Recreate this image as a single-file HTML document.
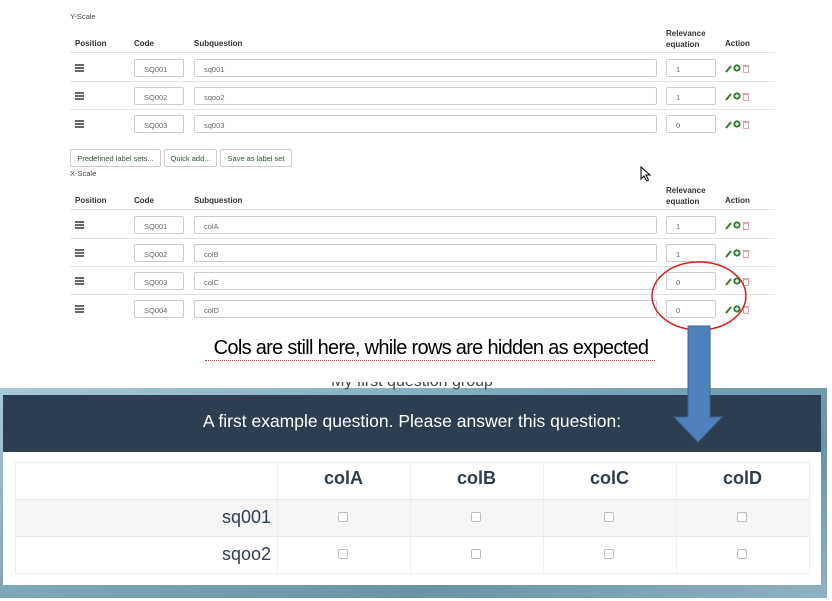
<!DOCTYPE html>
<html><head><meta charset="utf-8"><style>
*{box-sizing:border-box;margin:0;padding:0}
body{width:832px;height:601px;background:#fff;position:relative;overflow:hidden;font-family:"Liberation Sans",sans-serif;font-size:8px;color:#333}
.a{position:absolute}
.h{font-weight:bold;font-size:8px;color:#333}
.inp{position:absolute;height:18px;border:1px solid #ccc;border-radius:2px;font-size:7.5px;color:#666;padding:5px 0 0 9px;background:#fff}
.line{position:absolute;left:70px;width:705px;height:1px;background:#e3e3e3}
.bars{position:absolute;width:9px;height:8px}
.btn{position:absolute;top:149px;height:18px;border:1px solid #ccc;border-radius:2px;font-size:7.5px;color:#2d5a2d;padding:4px 0 0 0;text-align:center}
.ic{position:absolute}
.bg{left:0;top:388px;width:827px;height:210px;background:linear-gradient(160deg,#a8c9d8 0%,#7fa6bb 40%,#6a93a8 70%,#8fb2c4 100%)}
.cap{left:205px;width:452px;text-align:center;top:337px;font-family:"Liberation Sans",sans-serif;font-size:20px;color:#000;letter-spacing:-0.7px;white-space:nowrap}
.cb{position:absolute;width:10px;height:10px;border:1px solid #bbb;border-radius:2px;background:#fff}
.ch{position:absolute;top:468px;width:133px;text-align:center;font-size:18px;font-weight:bold;color:#2d3e50}
.rl{position:absolute;left:15px;width:256px;text-align:right;font-size:18px;color:#2d3e50}
</style></head><body>

<div class="a" style="left:70px;top:12px;font-size:7.5px;color:#444">Y-Scale</div>
<div class="a h" style="left:75px;top:39px">Position</div>
<div class="a h" style="left:134px;top:39px">Code</div>
<div class="a h" style="left:194px;top:39px">Subquestion</div>
<div class="a h" style="left:666px;top:28px;line-height:11px">Relevance<br>equation</div>
<div class="a h" style="left:725px;top:39px">Action</div>
<div class="line" style="top:52px"></div>

<div class="btn" style="left:70px;width:91px">Predefined label sets...</div>
<div class="btn" style="left:164px;width:53px">Quick add...</div>
<div class="btn" style="left:220px;width:72px">Save as label set</div>
<div class="a" style="left:70px;top:169px;font-size:7.5px;color:#444">X-Scale</div>
<div class="a h" style="left:75px;top:196px">Position</div>
<div class="a h" style="left:134px;top:196px">Code</div>
<div class="a h" style="left:194px;top:196px">Subquestion</div>
<div class="a h" style="left:666px;top:185px;line-height:11px">Relevance<br>equation</div>
<div class="a h" style="left:725px;top:196px">Action</div>
<div class="line" style="top:209px"></div>

<svg class="a" style="left:640px;top:166px" width="12" height="16"><path d="M1 1 L1 13 L4 10 L6.5 15 L8.5 14 L6 9 L10 9 Z" fill="#fff" stroke="#000" stroke-width="1"/></svg>

<script>
function rows(y0,data){var h='';data.forEach(function(d,i){var y=y0+i*28;
h+='<svg class="bars" style="left:75px;top:'+(y+5)+'px" width="9" height="8"><path d="M0 1h9M0 4h9M0 7h9" stroke="#333" stroke-width="1.5"/></svg>';
h+='<div class="inp" style="left:134px;top:'+y+'px;width:50px">'+d[0]+'</div>';
h+='<div class="inp" style="left:194px;top:'+y+'px;width:463px">'+d[1]+'</div>';
h+='<div class="inp" style="left:666px;top:'+y+'px;width:50px">'+d[2]+'</div>';
h+='<svg class="ic" style="left:725px;top:'+(y+5)+'px" width="26" height="9"><path d="M1 8 L6 2" stroke="#3a7a2a" stroke-width="2"/><circle cx="12" cy="4" r="3.6" fill="#2e7d32"/><path d="M10 4h4M12 2v4" stroke="#fff" stroke-width="1.2"/><rect x="18.5" y="2.5" width="5" height="6" fill="none" stroke="#e8a0a0" stroke-width="1"/><path d="M17.5 1.5h7" stroke="#e8a0a0"/></svg>';
if(i<data.length-1)h+='<div class="line" style="top:'+(y+22)+'px"></div>';});
document.write(h);}
rows(59,[["SQ001","sq001","1"],["SQ002","sqoo2","1"],["SQ003","sq003","0"]]);
rows(216,[["SQ001","colA","1"],["SQ002","colB","1"],["SQ003","colC","0"],["SQ004","colD","0"]]);
</script>

<div class="a cap">Cols are still here, while rows are hidden as expected</div>
<div class="a" style="left:205px;top:360px;width:450px;border-bottom:1px dotted #d33"></div>

<div class="a bg"></div>
<div class="a" style="left:3px;top:373px;width:818px;text-align:center;font-size:16px;color:#445">My first question group</div>
<div class="a" style="left:0;top:360px;width:832px;height:22px;background:#fff"></div>
<div class="a" style="left:205px;top:360px;width:450px;border-bottom:1px dotted #d33"></div>
<div class="a" style="left:3px;top:395px;width:818px;height:57px;background:#2d3e50;color:#fff;text-align:center;font-size:17.5px;padding-top:16px">A first example question. Please answer this question:</div>
<div class="a" style="left:3px;top:452px;width:818px;height:133px;background:#fff"></div>
<div class="a" style="left:15px;top:462px;width:795px;height:112px;border:1px solid #eee"></div>
<div class="a" style="left:16px;top:499px;width:793px;height:38px;background:#f5f5f5;border-top:1px solid #e8e8e8;border-bottom:1px solid #e8e8e8"></div>
<div class="a" style="left:277px;top:462px;width:1px;height:112px;background:#eee"></div>
<div class="a" style="left:410px;top:462px;width:1px;height:112px;background:#eee"></div>
<div class="a" style="left:543px;top:462px;width:1px;height:112px;background:#eee"></div>
<div class="a" style="left:676px;top:462px;width:1px;height:112px;background:#eee"></div>
<div class="ch" style="left:277px">colA</div>
<div class="ch" style="left:410px">colB</div>
<div class="ch" style="left:543px">colC</div>
<div class="ch" style="left:676px">colD</div>
<div class="rl" style="top:507px">sq001</div>
<div class="rl" style="top:544px">sqoo2</div>
<div class="cb" style="left:338px;top:512px"></div><div class="cb" style="left:471px;top:512px"></div><div class="cb" style="left:604px;top:512px"></div><div class="cb" style="left:737px;top:512px"></div>
<div class="cb" style="left:338px;top:549px"></div><div class="cb" style="left:471px;top:549px"></div><div class="cb" style="left:604px;top:549px"></div><div class="cb" style="left:737px;top:549px"></div>

<svg class="a" style="left:0;top:0" width="832" height="601">
<ellipse cx="699" cy="296" rx="47" ry="34" fill="none" stroke="#d42020" stroke-width="1.5"/>
<path d="M688 326 H710 V417 H722 L698 442 L674 417 H688 Z" fill="#4f81bd" stroke="#3a6596" stroke-width="1"/>
</svg>
</body></html>
